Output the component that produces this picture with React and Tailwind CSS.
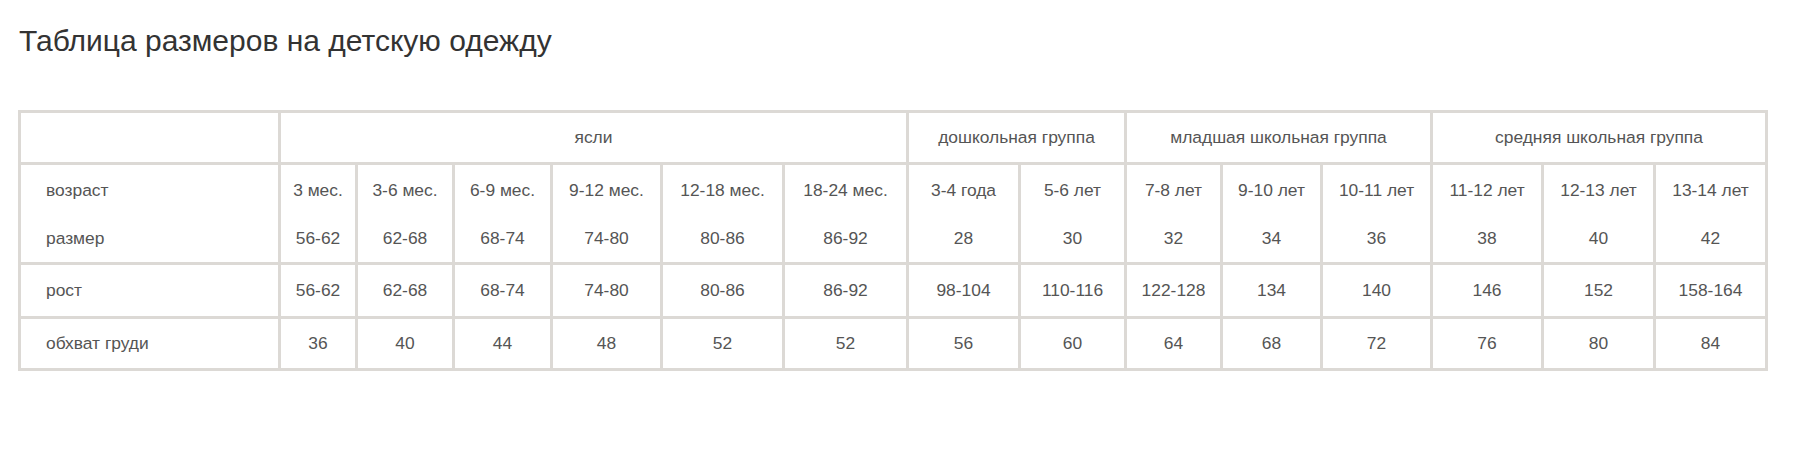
import React from "react";

const ages = ["3 мес.", "3-6 мес.", "6-9 мес.", "9-12 мес.", "12-18 мес.", "18-24 мес.", "3-4 года", "5-6 лет", "7-8 лет", "9-10 лет", "10-11 лет", "11-12 лет", "12-13 лет", "13-14 лет"];
const sizes = ["56-62", "62-68", "68-74", "74-80", "80-86", "86-92", "28", "30", "32", "34", "36", "38", "40", "42"];
const heights = ["56-62", "62-68", "68-74", "74-80", "80-86", "86-92", "98-104", "110-116", "122-128", "134", "140", "146", "152", "158-164"];
const chest = ["36", "40", "44", "48", "52", "52", "56", "60", "64", "68", "72", "76", "80", "84"];

const cell = "bg-white flex items-center justify-center";
const first = "bg-white flex items-center justify-start pl-[25px]";

export default function App() {
  return (
    <div className="min-h-[457px] bg-white font-['Liberation_Sans',Arial,sans-serif]">
      <div className="pl-[19px] pt-[23px] text-[30px] leading-[35px] text-[#333]">
        Таблица размеров на детскую одежду
      </div>
      <div className="ml-[18px] mt-[52px] w-[1750px] grid grid-cols-[257px_74px_94px_95px_107px_119px_121px_109px_103px_93px_97px_107px_108px_109px_109px] grid-rows-[49px_97px_51px_49px] gap-[3px] p-[3px] bg-[#dcd9d5] text-[17.4px] text-[#555]">
        <div className="bg-white"></div>
        <div className={`${cell} col-span-6`}>ясли</div>
        <div className={`${cell} col-span-2`}>дошкольная группа</div>
        <div className={`${cell} col-span-3`}>младшая школьная группа</div>
        <div className={`${cell} col-span-3`}>средняя школьная группа</div>

        <div className="bg-white flex flex-col pl-[25px] pt-[1px]">
          <div className="h-[48px] flex items-center">возраст</div>
          <div className="h-[48px] flex items-center">размер</div>
        </div>
        {ages.map((a, i) => (
          <div key={"a" + i} className="bg-white flex flex-col pt-[1px]">
            <div className="h-[48px] flex items-center justify-center">{a}</div>
            <div className="h-[48px] flex items-center justify-center">{sizes[i]}</div>
          </div>
        ))}

        <div className={first}>рост</div>
        {heights.map((h, i) => (
          <div key={"h" + i} className={cell}>{h}</div>
        ))}

        <div className={first}>обхват груди</div>
        {chest.map((c, i) => (
          <div key={"c" + i} className={cell}>{c}</div>
        ))}
      </div>
    </div>
  );
}
